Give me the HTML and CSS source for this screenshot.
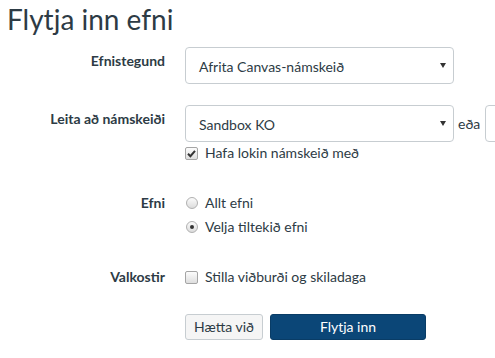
FILE: index.html
```html
<!DOCTYPE html>
<html lang="is">
<head>
<meta charset="utf-8">
<title>Flytja inn efni</title>
<link rel="stylesheet" href="styles.css">
</head>
<body>
<div class="page">
  <h1 class="title">Flytja inn efni</h1>
  <form class="form">
    <div class="row row-type">
      <div class="label">Efnistegund</div>
      <div class="control">
        <div class="select"><span class="select-text">Afrita Canvas-námskeið</span><span class="caret"></span></div>
      </div>
    </div>
    <div class="row row-search">
      <div class="label">Leita að námskeiði</div>
      <div class="control">
        <div class="inline">
          <div class="select"><span class="select-text">Sandbox KO</span><span class="caret"></span></div>
          <span class="or">eða</span>
          <div class="input"></div>
        </div>
        <div class="option-line check-line">
          <span class="cb cb-checked"><svg viewBox="0 0 13 13" width="13" height="13"><path d="M3 6.8 L5.4 9.2 L10 3.8" fill="none" stroke="#333" stroke-width="2"/></svg></span>
          <span>Hafa lokin námskeið með</span>
        </div>
      </div>
    </div>
    <div class="row row-content">
      <div class="label">Efni</div>
      <div class="control">
        <div class="option-line"><span class="radio"></span><span>Allt efni</span></div>
        <div class="option-line"><span class="radio radio-on"></span><span>Velja tiltekið efni</span></div>
      </div>
    </div>
    <div class="row row-options">
      <div class="label">Valkostir</div>
      <div class="control">
        <div class="option-line"><span class="cb"></span><span>Stilla viðburði og skiladaga</span></div>
      </div>
    </div>
    <div class="row row-actions">
      <div></div>
      <div class="control actions">
        <button type="button" class="btn btn-cancel">Hætta við</button>
        <button type="button" class="btn btn-primary">Flytja inn</button>
      </div>
    </div>
  </form>
</div>
</body>
</html>
```
FILE: styles.css
```css
html, body {
  margin: 0;
  padding: 0;
  background: #ffffff;
  overflow: hidden;
}
body {
  font-family: Lato, "Open Sans", sans-serif;
  color: #2d3b45;
  width: 495px;
  height: 358px;
}
.page {
  padding-left: 7px;
  overflow: hidden;
}
.title {
  margin: 0;
  font-size: 28px;
  font-weight: 400;
  line-height: 38px;
  color: #2d3b45;
}
.form {
  margin: 9px 0 0 0;
}
.row {
  display: grid;
  grid-template-columns: 158px minmax(0, 1fr);
  column-gap: 20px;
}
.control {
  min-width: 0;
  overflow: hidden;
}
.label {
  text-align: right;
  font-weight: 700;
  font-size: 14px;
  line-height: 24px;
}
.row-type .label,
.row-search .label {
  padding-top: 2px;
}
.row-type {
  margin-bottom: 21px;
}
.select {
  box-sizing: border-box;
  width: 269px;
  height: 37px;
  border: 1px solid #c7cdd1;
  border-radius: 4px;
  display: flex;
  align-items: center;
  justify-content: space-between;
  padding: 2px 7px 0 13px;
  font-size: 14px;
  line-height: 20px;
  background: #fff;
  flex: none;
}
.caret {
  width: 0;
  height: 0;
  border-left: 3px solid transparent;
  border-right: 3px solid transparent;
  border-top: 5px solid #333;
  margin-top: -2px;
}
.inline {
  display: flex;
  align-items: center;
  flex-wrap: nowrap;
}
.or {
  font-size: 14px;
  margin-left: 4px;
  margin-right: 5px;
  flex: none;
}
.input {
  flex: none;
  box-sizing: border-box;
  width: 120px;
  height: 37px;
  border: 1px solid #c7cdd1;
  border-radius: 4px;
}
.option-line {
  display: flex;
  align-items: center;
  font-size: 14px;
  line-height: 24px;
}
.check-line {
  line-height: 18px;
  margin-top: 2px;
}
.row-content {
  margin-top: 29px;
}
.row-options {
  margin-top: 26px;
}
.cb {
  box-sizing: border-box;
  width: 13px;
  height: 13px;
  border: 1px solid #a5a5a5;
  border-radius: 2px;
  background: linear-gradient(#fcfcfc, #dedede);
  margin-right: 7px;
  flex: none;
  display: flex;
  align-items: center;
  justify-content: center;
}
.cb svg {
  display: block;
  margin: -1px;
}
.radio {
  box-sizing: border-box;
  width: 12px;
  height: 12px;
  border: 1px solid #b0b0b0;
  border-radius: 50%;
  background: linear-gradient(#fbfbfb, #dcdcdc);
  margin-left: 1px;
  margin-right: 7px;
  flex: none;
  display: flex;
  align-items: center;
  justify-content: center;
}
.radio-on::after {
  content: "";
  width: 4px;
  height: 4px;
  border-radius: 50%;
  background: #333;
}
.row-actions {
  margin-top: 25px;
}
.actions {
  display: flex;
  gap: 7px;
  overflow: visible;
}
.btn {
  box-sizing: border-box;
  height: 26px;
  border-radius: 3px;
  font-family: Lato, "Open Sans", sans-serif;
  font-size: 14px;
  padding: 0;
  line-height: 24px;
}
.btn-cancel {
  width: 78px;
  background: #f5f5f5;
  border: 1px solid #c7cdd1;
  color: #2d3b45;
}
.btn-primary {
  width: 156px;
  background: #0b4677;
  border: 1px solid #093c66;
  color: #ffffff;
}
```
